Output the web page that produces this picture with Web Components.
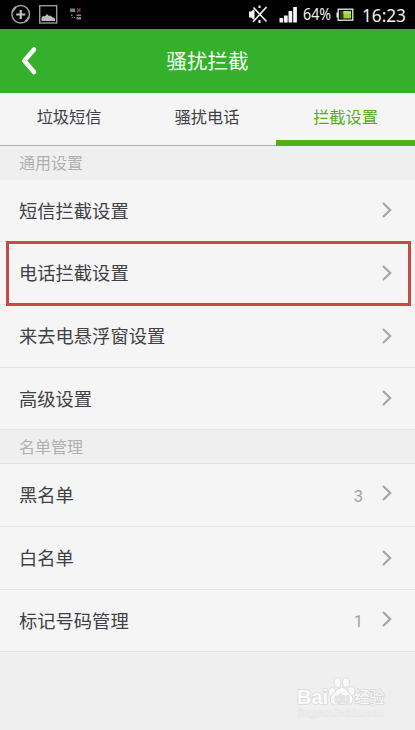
<!DOCTYPE html>
<html lang="zh-CN">
<head>
<meta charset="utf-8">
<title>骚扰拦截</title>
<style>
body {
    margin: 0;
    background: #efefef;
    font-family: Roboto, "Noto Sans CJK SC", sans-serif;
    color: #404045;
}
</style>
</head>
<body>
<phone-screen>
    <status-bar battery="64%" time="16:23"></status-bar>
    <title-bar>骚扰拦截</title-bar>
    <tab-bar>
        <tab-item>垃圾短信</tab-item>
        <tab-item>骚扰电话</tab-item>
        <tab-item active>拦截设置</tab-item>
    </tab-bar>
    <setting-group label="通用设置">
        <setting-row style="--h:62px">短信拦截设置</setting-row>
        <setting-row marked>电话拦截设置</setting-row>
        <setting-row>来去电悬浮窗设置</setting-row>
        <setting-row style="--h:62px">高级设置</setting-row>
    </setting-group>
    <setting-group label="名单管理" lined>
        <setting-row count="3">黑名单</setting-row>
        <setting-row>白名单</setting-row>
        <setting-row count="1" style="--h:62px">标记号码管理</setting-row>
    </setting-group>
    <water-mark></water-mark>
</phone-screen>

<script>
function define(name, html, setup) {
    const template = document.createElement("template");
    template.innerHTML = html;
    window.customElements.define(name, class extends HTMLElement {
        constructor() {
            super();
            this.attachShadow({ mode: "open" });
            this.shadowRoot.appendChild(template.content.cloneNode(true));
        }
        connectedCallback() {
            if (setup) setup(this, this.shadowRoot);
        }
    });
}

define("phone-screen", `
<style>
:host { display: block; position: relative; width: 415px; height: 730px; overflow: hidden; background: #efefef; }
</style>
<slot></slot>
`);

define("status-bar", `
<style>
:host { display: flex; align-items: center; box-sizing: border-box; height: 29px; padding: 0 8px 0 10px; background: #000; color: #f2f2f2; }
svg { display: block; flex: none; }
.space { flex: 1; }
span { font-family: "Noto Sans", sans-serif; white-space: nowrap; line-height: 29px; }
#battery { font-size: 15.5px; width: 28px; margin: 0 5px 0 5px; }
#battery b { display: block; font-weight: normal; transform: scaleX(.92); transform-origin: 0 50%; }
#time { font-size: 18.3px; margin-left: 8px; width: 45px; }
#time b { display: block; font-weight: normal; transform: scaleX(.94); transform-origin: 0 50%; }
</style>
<svg width="75" height="29" viewBox="0 0 75 29">
    <circle cx="10.7" cy="14.3" r="8.8" fill="none" stroke="#a0a0a0" stroke-width="1.5"/>
    <path d="M2.8 11.5A8.3 8.3 0 0 1 6 7M18.7 17A8.3 8.3 0 0 1 15.500 21.500" fill="none" stroke="#a0a0a0" stroke-width="2.200"/>
    <path d="M10.700 10v9M6.200 14.500h9" stroke="#c4c4c4" stroke-width="2.200"/>
    <rect x="29.700" y="5.700" width="17" height="17.300" fill="none" stroke="#999" stroke-width="1.400"/>
    <path d="M31.500 21v-3l1.500-2 2 .3 2-2.300 2 2 1.500-.5 2 2h1.500l1 1.500v2z" fill="#bbb"/>
    <path d="M60 8.500h5v3.500h-5z" fill="#7d807d"/>
    <path d="M67 8.500l3.500 3.500M70.500 8.500l-3.500 3.500" stroke="#9b3a2c" stroke-width="1.200"/>
    <path d="M61 14.500h1.500v1.500h-1.500zM61.500 17h1.500v1h-1.500zM64 17h1v1h-1zM66.500 14.500h4.500v1.500h-4.500zM66.500 17h4.500v2.500h-4.500z" fill="#858585"/>
</svg>
<div class="space"></div>
<svg width="50" height="29" viewBox="0 0 50 29">
    <path d="M1 11.500h2.500v6h-2.500zM3.500 11l3-2v11l-3-2zM10.500 5.500h2v2.500h-2zM10.500 20h2v3h-2z" fill="#f4f4f4"/>
    <path d="M5 22L18.500 7M5.500 7.500L18.500 21.500" stroke="#f4f4f4" stroke-width="1.600"/>
    <path d="M31.500 18h3.700v4.500h-3.700zM36 15.500h3.700v7h-3.700zM40.500 11h3.700v11.500h-3.700zM45.200 7h3.700v15.500h-3.700z" fill="#f8f8f8"/>
</svg>
<span id="battery"><b></b></span>
<svg width="18" height="29" viewBox="0 0 18 29">
    <rect x="2.200" y="9.200" width="14.600" height="11" fill="none" stroke="#eee" stroke-width="1.300"/>
    <path d="M.5 12.500h1.500v5h-1.500z" fill="#eee"/>
    <path d="M4 11h4v7.500h-4z" fill="#303820"/>
    <path d="M7.500 11h7.500v7.500h-7.500z" fill="#9fd12a"/>
    <path d="M7.500 11h7.500v3h-7.500z" fill="#b8dc55"/>
</svg>
<span id="time"><b></b></span>
`, (el, root) => {
    root.querySelector("#battery b").textContent = el.getAttribute("battery");
    root.querySelector("#time b").textContent = el.getAttribute("time");
});

define("title-bar", `
<style>
:host { display: grid; grid-template-columns: 60px 1fr 60px; align-items: center; height: 64px; background: #34b02c; color: #f4fff2; font-size: 20.5px; line-height: 30px; text-align: center; }
svg { display: block; }
div { padding-top: 2px; }
</style>
<svg width="60" height="64" viewBox="0 0 60 64" fill="none" stroke="#fff" stroke-width="4.500" stroke-linecap="round" stroke-linejoin="round">
    <path d="M34 20.500L24.300 31.800L34 43"/>
</svg>
<div><slot></slot></div>
`);

define("tab-bar", `
<style>
:host { display: grid; grid-template-columns: 138px 138px 1fr; box-sizing: border-box; height: 53px; background: linear-gradient(#f0fced 0, #f5f5f5 4px) no-repeat; box-shadow: inset 0 -1px #93cb8a; }
</style>
<slot></slot>
`);

define("tab-item", `
<style>
:host { display: flex; align-items: center; justify-content: center; box-sizing: border-box; padding-bottom: 3px; font-size: 16.2px; line-height: 24px; }
:host([active]) { color: #53b01b; box-shadow: inset 0 -6px #51b015; }
</style>
<div><slot></slot></div>
`);

define("setting-group", `
<style>
:host { display: block; }
header { box-sizing: border-box; height: 34px; padding-left: 19px; color: #b0b0b0; font-size: 16px; line-height: 36px; background: #efefef; }
:host([lined]) header { border-bottom: 1px solid #e0e0e0; }
</style>
<header></header>
<slot></slot>
`, (el, root) => {
    root.querySelector("header").textContent = el.getAttribute("label");
});

define("setting-row", `
<style>
:host { display: flex; align-items: center; position: relative; box-sizing: border-box; height: var(--h, 63px); padding: 0 22px 0 19px; background: #f5f5f5; border-bottom: 1px solid #e5e5e5; font-size: 18.3px; line-height: 28px; }
.label { flex: 1; padding-top: 2px; }
.count { color: #a0a3a6; font-size: 16.5px; padding: 3px 18px 0 0; }
svg { display: block; margin-bottom: 1px; }
:host([count]) svg { margin-bottom: 4px; }
.mark { display: none; }
:host([marked]) .mark { display: block; position: absolute; z-index: 1; left: 6px; right: 4px; top: -1px; bottom: -2px; box-sizing: border-box; border: 3px solid #c64b47; }
</style>
<div class="label"><slot></slot></div>
<span class="count"></span>
<svg width="12" height="18" viewBox="0 0 12 18" fill="none" stroke="#a5a5a5" stroke-width="2.200">
    <path d="M2 2L9.200 9L2 16"/>
</svg>
<div class="mark"></div>
`, (el, root) => {
    root.querySelector(".count").textContent = el.getAttribute("count") || "";
});

define("water-mark", `
<style>
:host { display: block; position: absolute; left: 296px; top: 674px; width: 92px; height: 46px; }
svg { display: block; }
text { font-family: "Liberation Sans", "Noto Sans CJK SC", sans-serif; }
</style>
<svg width="92" height="46" viewBox="0 0 92 46" fill="#fafafa" stroke="#d9d9d9" stroke-width="1.600" paint-order="stroke">
    <text x="1" y="30" font-size="20" font-weight="bold" textLength="31" lengthAdjust="spacingAndGlyphs">Bai</text>
    <ellipse cx="36" cy="18" rx="3" ry="4"/>
    <ellipse cx="41.500" cy="8.500" rx="3" ry="4.300"/>
    <ellipse cx="50" cy="8.500" rx="3" ry="4.300"/>
    <ellipse cx="55.500" cy="17" rx="3" ry="4"/>
    <path d="M46 14c4 0 5 4 8 6.500 4 3 3 10-2 10-3 0-4-.5-6.500-.5s-4 .5-6.500.5c-5 0-5.500-7-2-10 3-2.500 5-6.500 9-6.500z"/>
    <text x="38.500" y="28.500" font-size="13" font-weight="bold" fill="#e6e6e6" stroke="#d0d0d0" stroke-width="1" textLength="15" lengthAdjust="spacingAndGlyphs">du</text>
    <text x="58.500" y="29" font-size="15.500" textLength="30" lengthAdjust="spacingAndGlyphs">经验</text>
    <text x="2" y="42" font-size="9.500" fill="#f3f3f3" stroke="#e2e2e2" stroke-width="1" textLength="86" lengthAdjust="spacingAndGlyphs">jingyan.baidu.com</text>
</svg>
`);
</script>
</body>
</html>
